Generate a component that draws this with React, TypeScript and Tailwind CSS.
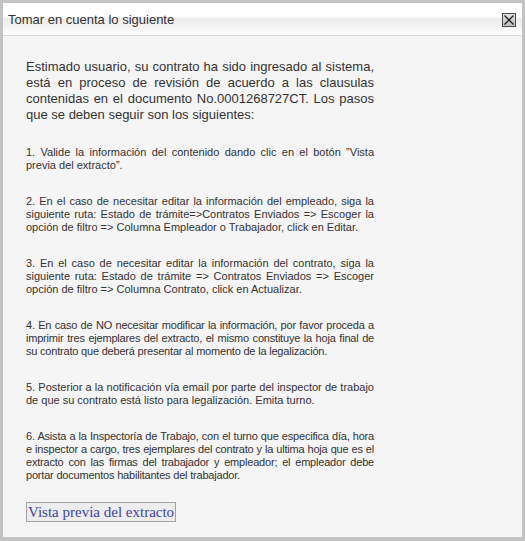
import React from "react";

const items: { t: string; c: string }[] = [
  { t: "1. Valide la información del contenido dando clic en el botón \u201DVista previa del extracto\u201D.", c: "tracking-normal" },
  { t: "2. En el caso de necesitar editar la información del empleado, siga la siguiente ruta: Estado de trámite=>Contratos Enviados => Escoger la opción de filtro => Columna Empleador o Trabajador, click en Editar.", c: "tracking-normal" },
  { t: "3. En el caso de necesitar editar la información del contrato, siga la siguiente ruta: Estado de trámite => Contratos Enviados => Escoger opción de filtro => Columna Contrato, click en Actualizar.", c: "tracking-normal" },
  { t: "4. En caso de NO necesitar modificar la información, por favor proceda a imprimir tres ejemplares del extracto, el mismo constituye la hoja final de su contrato que deberá presentar al momento de la legalización.", c: "tracking-[-0.2px]" },
  { t: "5. Posterior a la notificación vía email por parte del inspector de trabajo de que su contrato está listo para legalización. Emita turno.", c: "tracking-normal" },
  { t: "6. Asista a la Inspectoría de Trabajo, con el turno que especifica día, hora e inspector a cargo, tres ejemplares del contrato y la ultima hoja que es el extracto con las firmas del trabajador y empleador; el empleador debe portar documentos habilitantes del trabajador.", c: "tracking-[-0.2px]" },
];

export default function App() {
  return (
    <div
      className="w-[525px] h-[541px] bg-[#c3c3c3] pt-[3px] pl-[3px] overflow-hidden"
      style={{ fontFamily: '"Liberation Sans", Arial, sans-serif' }}
    >
      <div className="w-[519px] h-[534px] bg-[#f5f5f5] flex flex-col">
        <div className="h-[33px] shrink-0 border-b border-[#dadada] bg-[linear-gradient(to_bottom,#ffffff_0px,#ffffff_13px,#ececec_16px,#f6f6f6_26px,#ffffff_32px)] flex items-center justify-between pl-[5px] pr-[6px] pt-[1px]">
          <span className="text-[13px] text-[#333333] leading-[16px]">Tomar en cuenta lo siguiente</span>
          <div className="w-[14px] h-[14px] border border-[#4a4a4a] bg-[linear-gradient(to_bottom,#e2e2e2,#bdbdbd)] flex items-center justify-center">
            <svg width="12" height="12" viewBox="0 0 12 12">
              <path d="M1.5 1.5 L10.5 10.5 M10.5 1.5 L1.5 10.5" stroke="#222" strokeWidth="1.3" />
            </svg>
          </div>
        </div>
        <div className="pl-[23px] pt-[23px] w-[371px]">
          <p className="text-[13px] leading-[16px] text-[#333333] text-justify">
            Estimado usuario, su contrato ha sido ingresado al sistema, está en proceso de revisión de acuerdo a las clausulas contenidas en el documento No.0001268727CT. Los pasos que se deben seguir son los siguientes:
          </p>
          {items.map((it, i) => (
            <p
              key={i}
              className={"mt-[23px] text-[11px] leading-[13px] text-[#333333] text-justify " + it.c}
            >
              {it.t}
            </p>
          ))}
          <button
            className="mt-[20px] h-[20px] px-[1px] border border-[#a3a3a3] bg-[#ededed] text-[15px] leading-[18px] text-[#4242a8]"
            style={{ fontFamily: '"Liberation Serif", "Times New Roman", serif' }}
          >
            Vista previa del extracto
          </button>
        </div>
      </div>
    </div>
  );
}
